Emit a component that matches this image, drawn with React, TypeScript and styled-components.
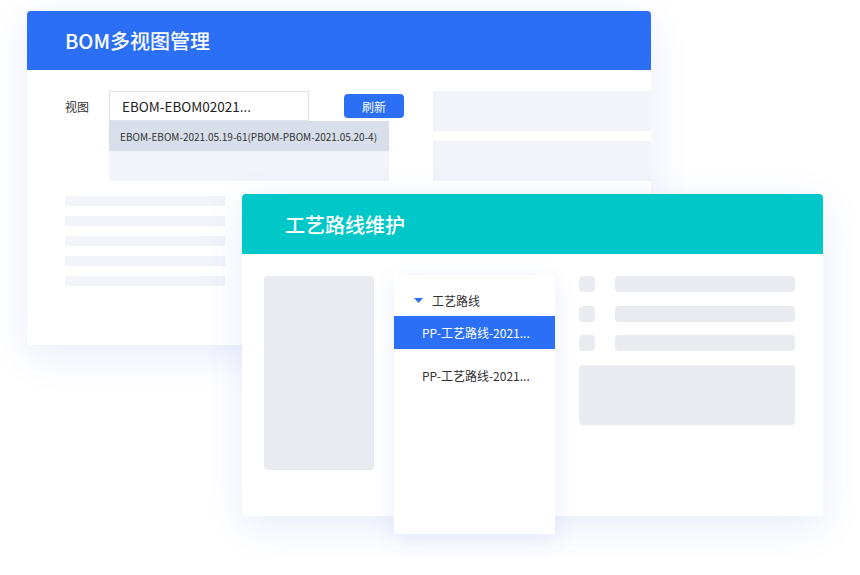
import React from 'react';
import styled, { createGlobalStyle } from 'styled-components';

const GlobalStyle = createGlobalStyle`
  html, body {
    margin: 0;
    padding: 0;
    background: #ffffff;
  }
  body {
    font-family: "Noto Sans CJK SC", "Noto Sans", sans-serif;
    color: #333333;
  }
`;

const Stage = styled.div`
  position: relative;
  width: 860px;
  height: 575px;
  overflow: hidden;
  background: #ffffff;
`;

interface WindowProps {
  $left: number;
  $top: number;
  $width: number;
  $height: number;
  $layer: number;
}

// the two windows overlap like windows on a desktop, so they are placed on the canvas
const Window = styled.section<WindowProps>`
  position: absolute;
  left: ${p => p.$left}px;
  top: ${p => p.$top}px;
  width: ${p => p.$width}px;
  height: ${p => p.$height}px;
  z-index: ${p => p.$layer};
  display: flex;
  flex-direction: column;
  background: #ffffff;
  border-radius: 4px;
  box-shadow: 0 10px 40px rgba(45, 85, 210, 0.11);
`;

const TitleBar = styled.header<{ $color: string; $height: number; $pad: number }>`
  display: flex;
  align-items: center;
  flex: none;
  height: ${p => p.$height}px;
  padding-left: ${p => p.$pad}px;
  background: ${p => p.$color};
  border-radius: 4px 4px 0 0;
  color: #ffffff;
  font-size: 20px;
  font-weight: 500;
`;

/* ---------- BOM window ---------- */

const BomBody = styled.div`
  display: flex;
  padding-top: 21px;
  flex: 1;
  overflow: hidden;
  border-radius: 0 0 4px 4px;
`;

const BomMain = styled.div`
  display: flex;
  flex-direction: column;
  padding-left: 38px;
`;

const FormRow = styled.div`
  display: flex;
  align-items: center;
  height: 30px;
`;

const FieldLabel = styled.span`
  width: 44px;
  font-size: 12px;
  color: #333333;
`;

const SelectWrap = styled.div`
  position: relative;
  width: 200px;
  height: 30px;
`;

const SelectInput = styled.div`
  box-sizing: border-box;
  height: 30px;
  padding-left: 12px;
  display: flex;
  align-items: center;
  border: 1px solid #dde3ec;
  background: #ffffff;
  font-size: 13.5px;
  color: #222222;
`;

const DropMenu = styled.ul`
  position: absolute;
  top: 100%;
  left: 0;
  width: 280px;
  margin: 0;
  padding: 0;
  list-style: none;
  z-index: 2;
`;

const DropItem = styled.li<{ $active?: boolean }>`
  height: 30px;
  padding-left: 11px;
  display: flex;
  align-items: center;
  white-space: nowrap;
  font-size: 10px;
  color: #333333;
  background: ${p => (p.$active ? '#d8dfeb' : '#f2f4f9')};
`;

const PrimaryButton = styled.button`
  margin-left: 35px;
  width: 60px;
  height: 24px;
  padding: 0;
  border: none;
  border-radius: 4px;
  background: #2a6ff5;
  color: #ffffff;
  font-family: inherit;
  font-size: 12px;
`;

const LineList = styled.div`
  display: flex;
  flex-direction: column;
  gap: 10px;
  margin-top: 75px;
`;

const TextLine = styled.div`
  width: 160px;
  height: 10px;
  background: #f2f4f9;
`;

const SideBlocks = styled.div`
  display: flex;
  flex-direction: column;
  gap: 10px;
  margin-left: auto;
  width: 218px;
`;

const SideBlock = styled.div`
  height: 40px;
  background: #f2f4f9;
`;

/* ---------- route window ---------- */

const RouteBody = styled.div`
  display: flex;
  align-items: flex-start;
  padding: 21px 0 0 22px;
`;

const Placeholder = styled.div`
  width: 110px;
  height: 194px;
  margin-top: 1px;
  border-radius: 4px;
  background: #e9ebf0;
`;

const TreePanel = styled.nav`
  flex: none;
  width: 161px;
  height: 259px;
  margin-left: 20px;
  padding-top: 13px;
  box-sizing: border-box;
  background: #ffffff;
  border-radius: 2px;
  box-shadow: 0 6px 24px rgba(50, 90, 210, 0.1);
`;

const TreeHeader = styled.div`
  display: flex;
  align-items: center;
  gap: 9px;
  height: 24px;
  padding-left: 20px;
  font-size: 12px;
  color: #333333;
`;

const TreeRow = styled.div<{ $selected?: boolean }>`
  display: flex;
  align-items: center;
  height: 33px;
  margin-top: ${p => (p.$selected ? 4 : 10)}px;
  padding-left: 28px;
  font-size: 12px;
  color: ${p => (p.$selected ? '#ffffff' : '#333333')};
  background: ${p => (p.$selected ? '#2a6ff5' : 'transparent')};
`;

const DetailPane = styled.div`
  display: flex;
  flex-direction: column;
  gap: 13.5px;
  width: 216px;
  margin-left: 24px;
  margin-top: 1px;
`;

const DetailRow = styled.div`
  display: flex;
  gap: 20px;
`;

const Check = styled.div`
  width: 16px;
  height: 16px;
  border-radius: 4px;
  background: #e9ebf0;
`;

const Bar = styled.div`
  flex: 1;
  height: 16px;
  border-radius: 4px;
  background: #e9ebf0;
`;

const BigBlock = styled.div`
  height: 60px;
  border-radius: 4px;
  background: #e9ebf0;
`;

const Caret = () => (
  <svg width="9" height="5" viewBox="0 0 9 5">
    <polygon points="0,0 9,0 4.5,5" fill="#2a6ff5" />
  </svg>
);

export default function App() {
  return (
    <Stage>
      <GlobalStyle />
      <Window $left={27} $top={11} $width={624} $height={334} $layer={1}>
        <TitleBar $color="#2a6ff5" $height={59} $pad={38}>BOM多视图管理</TitleBar>
        <BomBody>
          <BomMain>
            <FormRow>
              <FieldLabel>视图</FieldLabel>
              <SelectWrap>
                <SelectInput>EBOM-EBOM02021...</SelectInput>
                <DropMenu>
                  <DropItem $active>EBOM-EBOM-2021.05.19-61(PBOM-PBOM-2021.05.20-4)</DropItem>
                  <DropItem />
                </DropMenu>
              </SelectWrap>
              <PrimaryButton>刷新</PrimaryButton>
            </FormRow>
            <LineList>
              {[0, 1, 2, 3, 4].map(i => (
                <TextLine key={i} />
              ))}
            </LineList>
          </BomMain>
          <SideBlocks>
            <SideBlock />
            <SideBlock />
          </SideBlocks>
        </BomBody>
      </Window>

      <Window $left={242} $top={194} $width={581} $height={322} $layer={2}>
        <TitleBar $color="#00c8c8" $height={60} $pad={43}>工艺路线维护</TitleBar>
        <RouteBody>
          <Placeholder />
          <TreePanel>
            <TreeHeader>
              <Caret />
              工艺路线
            </TreeHeader>
            <TreeRow $selected>PP-工艺路线-2021...</TreeRow>
            <TreeRow>PP-工艺路线-2021...</TreeRow>
          </TreePanel>
          <DetailPane>
            {[0, 1, 2].map(i => (
              <DetailRow key={i}>
                <Check />
                <Bar />
              </DetailRow>
            ))}
            <BigBlock />
          </DetailPane>
        </RouteBody>
      </Window>
    </Stage>
  );
}
